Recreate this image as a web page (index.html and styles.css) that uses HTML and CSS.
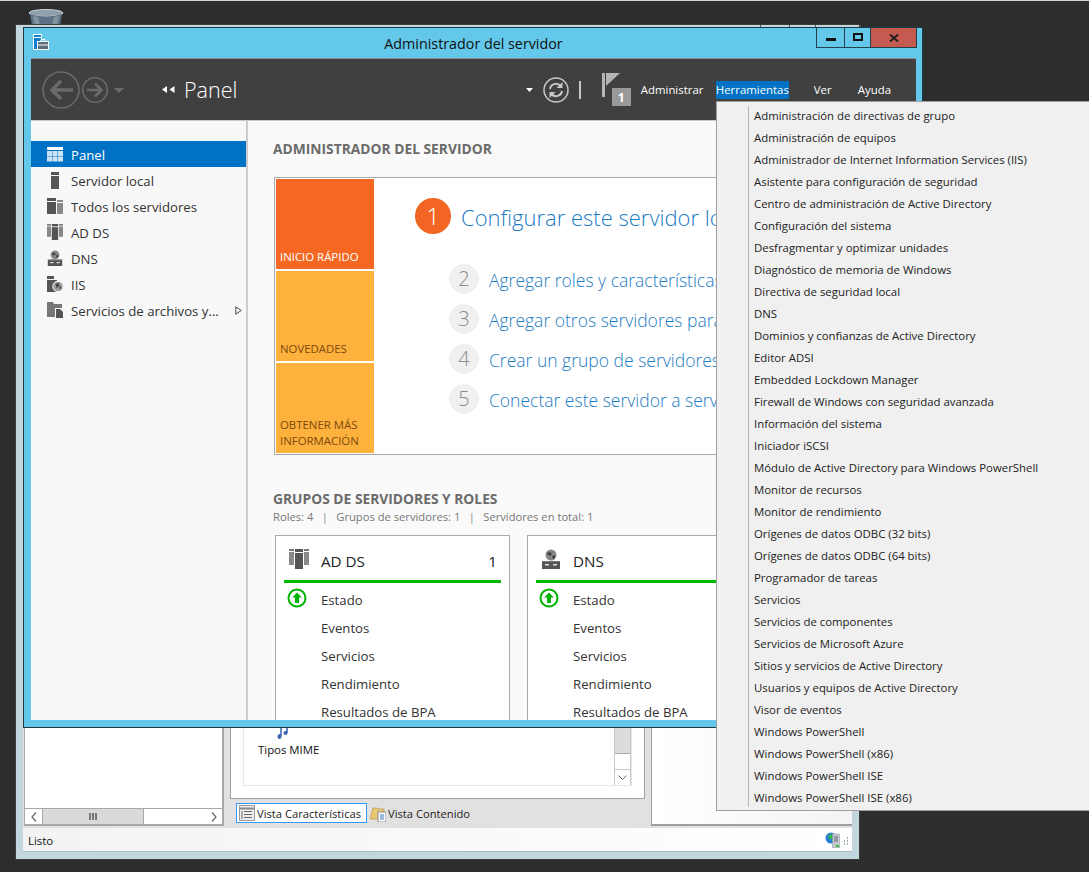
FILE: index.html
```html
<!DOCTYPE html>
<html lang="es">
<head>
<meta charset="utf-8">
<title>Administrador del servidor</title>
<link rel="stylesheet" href="styles.css">
</head>
<body>
<svg class="defs" width="0" height="0">
  <symbol id="i-adds" viewBox="0 0 20 20">
    <rect x="0" y="0" width="5" height="2" fill="#777"/><rect x="15" y="0" width="5" height="2" fill="#777"/>
    <rect x="0" y="3" width="5" height="13" fill="#888"/><rect x="15" y="3" width="5" height="13" fill="#888"/>
    <rect x="6" y="0" width="8" height="3" fill="#555"/><rect x="6" y="4" width="8" height="16" fill="#555"/>
  </symbol>
  <symbol id="i-dns" viewBox="0 0 20 20">
    <circle cx="10" cy="6" r="5.500" fill="#888"/><path d="M6 4l3-1 2 2-2 2-2-1zM11 7l3-1v3l-2 1z" fill="#444"/>
    <rect x="1" y="12" width="18" height="8" fill="#555"/>
    <rect x="4" y="15" width="4" height="1.500" fill="#ddd"/><rect x="12" y="15" width="4" height="1.500" fill="#ddd"/>
    <rect x="1" y="12" width="18" height="1" fill="#777"/>
  </symbol>
  <symbol id="i-status" viewBox="0 0 20 20">
    <circle cx="10" cy="10" r="8.500" fill="#fff" stroke="#00b300" stroke-width="2"/>
    <path d="M10 4.500l4.800 5H12v5.500H8V9.500H5.200z" fill="#00b300"/>
  </symbol>
</svg>
<div class="desktop">
  <div class="topline"></div>
  <svg class="recycle" viewBox="0 0 36 16" width="36" height="16">
    <ellipse cx="18" cy="4" rx="17" ry="3.500" fill="#8fa0ad" stroke="#c9d2d8"/>
    <path d="M2 5l2 11h28l2-11q-16 5-32 0z" fill="#5d7285"/>
    <path d="M5 7l2 9h5L10 8zM26 8l-2 8h5l2-9z" fill="#83939f"/>
  </svg>

  <section class="iis">
    <div class="iis-top">
      <span class="tick tick1"></span><span class="tick tick2"></span><span class="tick tick3"></span><span class="tick tick4"></span>
    </div>
    <div class="iis-body">
      <div class="tree">
        <div class="tree-fill"></div>
        <div class="hscroll">
          <span class="sb-btn"><svg viewBox="0 0 6 10" width="6" height="10"><path d="M5 0.500L1 5l4 4.500" fill="none" stroke="#666" stroke-width="1.200"/></svg></span>
          <span class="sb-thumb"><svg viewBox="0 0 8 7" width="8" height="7"><path d="M1 0v7M4 0v7M7 0v7" stroke="#555" stroke-width="1.500"/></svg></span>
          <span class="sb-track"></span>
          <span class="sb-btn"><svg viewBox="0 0 6 10" width="6" height="10"><path d="M1 0.500L5 5 1 9.500" fill="none" stroke="#666" stroke-width="1.200"/></svg></span>
        </div>
      </div>
      <div class="center">
        <div class="features">
          <div class="feature-box">
            <div class="feature">
              <svg class="note" viewBox="0 0 40 12" width="40" height="12">
                <path d="M15 0v9M21 0v6" stroke="#3a62b5" stroke-width="1.500"/>
                <ellipse cx="13.500" cy="9.500" rx="2" ry="2.500" fill="#3a62b5"/><ellipse cx="19.500" cy="6" rx="2" ry="2" fill="#3a62b5"/>
                <path d="M23 0.500h16" stroke="#bbb"/>
              </svg>
              <span>Tipos MIME</span>
            </div>
            <div class="vscroll">
              <span class="vs-thumb"></span>
              <span class="vs-track"></span>
              <span class="vs-btn"><svg viewBox="0 0 9 5" width="9" height="5"><path d="M0.500 0.500l4 4 4-4" fill="none" stroke="#666"/></svg></span>
            </div>
          </div>
        </div>
        <div class="tabs">
          <div class="tab tab-on">
            <svg viewBox="0 0 16 16" width="16" height="16"><rect x="0.500" y="0.500" width="15" height="15" fill="#eee" stroke="#999"/><path d="M1 3.500h14" stroke="#888" stroke-width="2"/><path d="M5 6.500h8M5 9.500h8M5 12.500h8" stroke="#666"/><path d="M3 6v8" stroke="#aaa" stroke-width="2"/></svg>
            <span>Vista Características</span>
          </div>
          <div class="tab">
            <svg viewBox="0 0 16 18" width="16" height="18"><path d="M0 15L3 4h4l1 1h6v10z" fill="#e9c874" stroke="#b9953f" stroke-width="0.700"/><rect x="8" y="8" width="8" height="10" fill="#fff" stroke="#889"/><path d="M10 11h4M10 13h4M10 15h4" stroke="#3b78c4"/></svg>
            <span>Vista Contenido</span>
          </div>
        </div>
      </div>
      <div class="sidepane"></div>
    </div>
    <footer class="status">
      <span>Listo</span>
      <svg class="status-ico" viewBox="0 0 26 16" width="26" height="16">
        <circle cx="8" cy="6" r="5.500" fill="#2a7fd5"/><path d="M5 3l3-1 2 3-3 3zM9 8l2-1-1 3z" fill="#39b54a"/>
        <rect x="9.500" y="2" width="7" height="14" fill="#c3c9ce" stroke="#8d969c" stroke-width="0.500"/><path d="M11 5h4M11 7h4M11 9h4" stroke="#667"/><rect x="13" y="13" width="3" height="2" fill="#3fbf3f"/>
        <path d="M24 6h1M21 9h1M24 9h1M21 12h1M24 12h1" stroke="#9aa" stroke-width="2"/>
      </svg>
    </footer>
  </section>

  <section class="sm">
    <header class="titlebar">
      <svg class="appicon" viewBox="0 0 16 16" width="16" height="16">
        <rect x="0.500" y="0.500" width="8" height="15" fill="#0f7fd0" stroke="#fff"/>
        <path d="M1 3.500h7" stroke="#fff"/>
        <rect x="4.500" y="7.500" width="11" height="8" fill="#5b6d7a" stroke="#fff"/>
        <path d="M8 7.500V5.500h4v2M5 11h10" fill="none" stroke="#fff"/>
      </svg>
      <h1>Administrador del servidor</h1>
      <div class="controls">
        <span class="ctl ctl-min"><i></i></span>
        <span class="ctl ctl-max"><i></i></span>
        <span class="ctl ctl-close"><svg viewBox="0 0 10 8" width="10" height="8"><path d="M1 0.500l8 7M9 0.500l-8 7" stroke="#222" stroke-width="2"/></svg></span>
      </div>
    </header>
    <nav class="toolbar">
      <svg class="nav-arrows" viewBox="0 0 84 38" width="84" height="38">
        <circle cx="19" cy="19" r="18" fill="none" stroke="#6a6a6a" stroke-width="1.600"/>
        <path d="M31 19H10M19 10l-9 9 9 9" fill="none" stroke="#6a6a6a" stroke-width="3.500"/>
        <circle cx="53" cy="19" r="12.300" fill="none" stroke="#6a6a6a" stroke-width="1.600"/>
        <path d="M45 19h14M53 12.500l6.500 6.500-6.500 6.500" fill="none" stroke="#6a6a6a" stroke-width="2.600"/>
        <path d="M72 17h10l-5 5z" fill="#6a6a6a"/>
      </svg>
      <svg class="crumb" viewBox="0 0 13 7" width="13" height="7"><path d="M5 0v7L0 3.500zM12.500 0v7l-5-3.500z" fill="#fff"/></svg>
      <span class="crumb-text">Panel</span>
      <div class="toolbar-right">
        <svg class="drop" viewBox="0 0 7 4" width="7" height="4"><path d="M0 0h7L3.500 4z" fill="#fff"/></svg>
        <svg class="refresh" viewBox="0 0 26 26" width="26" height="26">
          <circle cx="13" cy="13" r="12" fill="none" stroke="#c8c8c8" stroke-width="1.500"/>
          <path d="M7 12a6 6 0 0 1 10.500-3M19 14a6 6 0 0 1-10.500 3" fill="none" stroke="#c8c8c8" stroke-width="2"/>
          <path d="M19.500 5v6h-6zM6.500 21v-6h6z" fill="#c8c8c8"/>
        </svg>
        <span class="sep"></span>
        <span class="flag">
          <svg viewBox="0 0 18 24" width="18" height="24"><rect x="0" y="0" width="3" height="24" fill="#b5b5b5"/><path d="M4 0h14L4 13z" fill="#b5b5b5"/></svg>
          <b class="badge">1</b>
        </span>
        <ul class="menubar">
          <li>Administrar</li>
          <li class="active">Herramientas</li>
          <li>Ver</li>
          <li>Ayuda</li>
        </ul>
      </div>
    </nav>
    <div class="workspace">
      <aside class="sidebar">
        <ul>
          <li class="selected">
            <svg viewBox="0 0 16 15" width="16" height="15"><rect width="16" height="3" fill="#fff"/><g fill="#cfe3f3"><rect y="4" width="5" height="5"/><rect x="5.500" y="4" width="5" height="5"/><rect x="11" y="4" width="5" height="5"/><rect y="9.500" width="5" height="5"/><rect x="5.500" y="9.500" width="5" height="5"/><rect x="11" y="9.500" width="5" height="5"/></g></svg>
            <span>Panel</span>
          </li>
          <li>
            <svg viewBox="0 0 16 17" width="16" height="17"><rect x="4" width="8" height="3" fill="#555"/><rect x="4" y="4" width="8" height="13" fill="#555"/></svg>
            <span>Servidor local</span>
          </li>
          <li>
            <svg viewBox="0 0 16 16" width="16" height="16"><rect width="9" height="3" fill="#555"/><rect y="4" width="9" height="12" fill="#555"/><rect x="10" y="2" width="6" height="2" fill="#888"/><rect x="10" y="5" width="6" height="11" fill="#888"/></svg>
            <span>Todos los servidores</span>
          </li>
          <li>
            <svg viewBox="0 0 20 20" width="16" height="16"><use href="#i-adds"/></svg>
            <span>AD DS</span>
          </li>
          <li>
            <svg viewBox="0 0 20 20" width="16" height="16"><use href="#i-dns"/></svg>
            <span>DNS</span>
          </li>
          <li>
            <svg viewBox="0 0 16 16" width="16" height="16"><rect width="7" height="3" fill="#555"/><rect y="4" width="10" height="12" fill="#555"/><circle cx="11" cy="10.500" r="5.200" fill="#999" stroke="#fff"/><path d="M8.500 8l3-1 1 3-3 2zM12 12l2-2v3z" fill="#444"/></svg>
            <span>IIS</span>
          </li>
          <li>
            <svg viewBox="0 0 16 16" width="16" height="16"><path d="M0 0h6l1 2h8v4H8v9H0z" fill="#777"/><path d="M9 7h4l3 3v6H9z" fill="#555"/></svg>
            <span class="clip">Servicios de archivos y...</span>
            <svg class="chev" viewBox="0 0 7 9" width="7" height="9"><path d="M0.800 0.800l5.400 3.700-5.400 3.700z" fill="none" stroke="#444"/></svg>
          </li>
        </ul>
      </aside>
      <main class="content">
        <h2 class="h-first">ADMINISTRADOR DEL SERVIDOR</h2>
        <div class="welcome">
          <div class="tiles">
            <div class="tile tile-hot">INICIO RÁPIDO</div>
            <div class="tile">NOVEDADES</div>
            <div class="tile">OBTENER MÁS INFORMACIÓN</div>
          </div>
          <div class="steps">
            <div class="step-main"><span class="num-main">1</span><span class="step-title">Configurar este servidor local</span></div>
            <div class="step"><span class="num">2</span><span class="step-text">Agregar roles y características</span></div>
            <div class="step"><span class="num">3</span><span class="step-text">Agregar otros servidores para administrar</span></div>
            <div class="step"><span class="num">4</span><span class="step-text">Crear un grupo de servidores</span></div>
            <div class="step"><span class="num">5</span><span class="step-text">Conectar este servidor a servicios en la nube</span></div>
          </div>
        </div>
        <h2 class="h-second">GRUPOS DE SERVIDORES Y ROLES</h2>
        <p class="counts">Roles: 4 <i>|</i> Grupos de servidores: 1 <i>|</i> Servidores en total: 1</p>
        <div class="cards">
          <article class="card">
            <header class="card-head">
              <svg viewBox="0 0 20 20" width="20" height="20"><use href="#i-adds"/></svg>
              <span class="card-title">AD DS</span><span class="card-count">1</span>
            </header>
            <ul>
              <li><svg viewBox="0 0 20 20" width="20" height="20"><use href="#i-status"/></svg><span>Estado</span></li>
              <li><span>Eventos</span></li>
              <li><span>Servicios</span></li>
              <li><span>Rendimiento</span></li>
              <li><span>Resultados de BPA</span></li>
            </ul>
          </article>
          <article class="card">
            <header class="card-head">
              <svg viewBox="0 0 20 20" width="20" height="20"><use href="#i-dns"/></svg>
              <span class="card-title">DNS</span><span class="card-count">1</span>
            </header>
            <ul>
              <li><svg viewBox="0 0 20 20" width="20" height="20"><use href="#i-status"/></svg><span>Estado</span></li>
              <li><span>Eventos</span></li>
              <li><span>Servicios</span></li>
              <li><span>Rendimiento</span></li>
              <li><span>Resultados de BPA</span></li>
            </ul>
          </article>
        </div>
      </main>
    </div>
  </section>

  <div class="dropdown">
    <ul>
      <li>Administración de directivas de grupo</li>
      <li>Administración de equipos</li>
      <li>Administrador de Internet Information Services (IIS)</li>
      <li>Asistente para configuración de seguridad</li>
      <li>Centro de administración de Active Directory</li>
      <li>Configuración del sistema</li>
      <li>Desfragmentar y optimizar unidades</li>
      <li>Diagnóstico de memoria de Windows</li>
      <li>Directiva de seguridad local</li>
      <li>DNS</li>
      <li>Dominios y confianzas de Active Directory</li>
      <li>Editor ADSI</li>
      <li>Embedded Lockdown Manager</li>
      <li>Firewall de Windows con seguridad avanzada</li>
      <li>Información del sistema</li>
      <li>Iniciador iSCSI</li>
      <li>Módulo de Active Directory para Windows PowerShell</li>
      <li>Monitor de recursos</li>
      <li>Monitor de rendimiento</li>
      <li>Orígenes de datos ODBC (32 bits)</li>
      <li>Orígenes de datos ODBC (64 bits)</li>
      <li>Programador de tareas</li>
      <li>Servicios</li>
      <li>Servicios de componentes</li>
      <li>Servicios de Microsoft Azure</li>
      <li>Sitios y servicios de Active Directory</li>
      <li>Usuarios y equipos de Active Directory</li>
      <li>Visor de eventos</li>
      <li>Windows PowerShell</li>
      <li>Windows PowerShell (x86)</li>
      <li>Windows PowerShell ISE</li>
      <li>Windows PowerShell ISE (x86)</li>
    </ul>
  </div>
</div>
</body>
</html>
```
FILE: styles.css
```css
* { box-sizing: border-box; }
html, body { margin: 0; padding: 0; }
body { font-family: "Open Sans", "Noto Sans", sans-serif; color: #222; }
ul { list-style: none; margin: 0; padding: 0; }
h1, h2, p { margin: 0; }
.defs { position: absolute; }

.desktop { position: relative; width: 1089px; height: 872px; background: #2d2d2d; overflow: hidden; }
.topline { height: 1px; background: #d5d3c8; }
.recycle { position: absolute; left: 28px; top: 9px; }

/* back window */
.iis { position: absolute; left: 15px; top: 24px; width: 845px; height: 836px; background: #c3d6dd; border: 1px solid #3c3c3c; display: flex; flex-direction: column; padding: 0 7px 7px 7px; }
.iis-top { height: 2px; flex: none; position: relative; }
.tick { position: absolute; top: 0; width: 1px; height: 3px; background: #555; }
.tick1 { left: 737px; } .tick2 { left: 766px; } .tick3 { left: 792px; } .tick4 { left: 837px; }
.iis-body { flex: 1; display: flex; background: #e1e1e1; min-height: 0; }
.tree { width: 200px; margin-left: 1px; margin-bottom: 2px; display: flex; flex-direction: column; background: #fff; border: 1px solid #a8a8a8; border-width: 0 2px 2px 1px; margin-right: 6px; }
.tree-fill { flex: 1; }
.hscroll { height: 16px; display: flex; background: #fff; border-top: 1px solid #a8a8a8; }
.sb-btn { width: 17px; display: flex; align-items: center; justify-content: center; }
.sb-thumb { width: 102px; background: #dadada; border: 1px solid #a8a8a8; border-width: 0 1px; display: flex; align-items: center; justify-content: center; }
.sb-track { flex: 1; }
.center { width: 415px; display: flex; flex-direction: column; margin-right: 6px; }
.features { flex: 1; background: #fff; border: 1px solid #a0a0a0; border-width: 0 1px 1px 1px; padding: 0 0 12px 12px; min-height: 0; display: flex; }
.feature-box { flex: 1; border: 1px solid #e8e8e8; border-width: 0 1px 1px 1px; margin-right: 12px; display: flex; justify-content: space-between; background: #fff; }
.feature { margin: auto 0 27px 14px; display: flex; flex-direction: column; font-size: 11.400px; line-height: 16px; color: #111; }
.note { margin: 0 0 3px 8px; }
.vscroll { width: 17px; display: flex; flex-direction: column; justify-content: flex-end; border: 1px solid #c8c8c8; border-width: 0 1px; }
.vs-thumb { flex: 1; background: #dcdcdc; border-bottom: 1px solid #aaa; }
.vs-track { height: 15px; background: #fff; }
.vs-btn { height: 16px; background: #fff; border-top: 1px solid #c8c8c8; display: flex; align-items: center; justify-content: center; }
.tabs { flex: none; height: 29px; display: flex; align-items: flex-start; padding: 4px 0 0 6px; font-size: 11.200px; color: #222; }
.tab { display: flex; align-items: center; gap: 2px; height: 20px; padding: 0 3px 0 2px; border: 1px solid transparent; white-space: nowrap; }
.tab-on { background: #fff; border-color: #3399ff; width: 131px; }
.sidepane { width: 201px; background: linear-gradient(90deg, #fff, #f4f4f4); border: 1px solid #a0a0a0; border-width: 0 0 2px 1px; margin-bottom: 2px; }
.status { flex: none; height: 24px; background: linear-gradient(90deg, #f3f3f3, #fff); border-bottom: 1px solid #a9bbc3; display: flex; align-items: center; justify-content: space-between; padding: 1px 3px 0 5px; font-size: 11.400px; color: #111; }
.status-ico { margin-top: -1px; }

/* server manager window */
.sm { position: absolute; left: 23px; top: 27px; width: 900px; height: 701px; background: #63c8ea; border: 1px solid #1e3a46; display: flex; flex-direction: column; padding: 0 6px 7px 7px; }
.titlebar { flex: none; height: 30px; position: relative; display: flex; align-items: center; justify-content: center; }
.appicon { position: absolute; left: 2px; top: 6px; }
.titlebar h1 { font-size: 14.300px; font-weight: 400; color: #111; padding-top: 1px; }
.controls { position: absolute; right: -1px; top: 0; display: flex; height: 20px; }
.ctl { display: flex; align-items: center; justify-content: center; height: 20px; border: 1px solid #24404c; border-top: 0; }
.ctl-min { width: 28px; border-right: 0; }
.ctl-min i { width: 10px; height: 3px; background: #111; margin-top: 4px; }
.ctl-max { width: 26px; border-right: 0; }
.ctl-max i { width: 10px; height: 8px; border: 2px solid #111; margin-top: -2px; }
.ctl-close { width: 47px; background: #c55a50; }
.toolbar { flex: none; height: 63px; background: #404040; border-top: 1px solid #8a9094; border-bottom: 1px solid #c8c8c8; display: flex; align-items: center; color: #fff; padding: 0 25px 0 11px; }
.nav-arrows { flex: none; margin-top: 1px; }
.crumb { margin-left: 36px; flex: none; }
.crumb-text { margin-left: 9px; font-size: 21.500px; font-weight: 300; line-height: 30px; margin-top: 1px; }
.toolbar-right { margin-left: auto; display: flex; align-items: center; }
.drop { flex: none; margin-right: -3px; }
.refresh { margin-left: 13px; flex: none; }
.sep { width: 2px; height: 18px; background: #c8c8c8; margin: 0 21px 0 10px; }
.flag { position: relative; display: block; width: 29px; height: 34px; margin-top: 8px; margin-right: 10px; }
.flag svg { position: absolute; left: 0; top: -4px; }
.badge { position: absolute; left: 10px; top: 11px; width: 19px; height: 18px; background: #999; color: #fff; font-size: 12px; font-weight: 700; line-height: 19px; text-align: center; }
.menubar { display: flex; font-size: 11.400px; }
.menubar li { height: 18px; line-height: 18px; white-space: nowrap; }
.menubar li:nth-child(1) { width: 62px; margin-right: 13px; }
.menubar li:nth-child(2) { width: 73px; margin-right: 25px; text-align: center; }
.menubar li:nth-child(3) { width: 18px; margin-right: 26px; }
.menubar .active { background: #0072c6; }
.workspace { flex: 1; display: flex; min-height: 0; background: #fafafa; }
.sidebar { flex: none; width: 217px; background: #f8f8f8; border-right: 2px solid #cccccc; padding-top: 20px; font-size: 13.200px; color: #333; }
.sidebar li { height: 26px; display: flex; align-items: center; padding-left: 16px; }
.sidebar li > span { margin-left: 8px; padding-top: 2px; }
.sidebar .selected { background: #0072c6; color: #fff; }
.sidebar .clip { white-space: nowrap; }
.chev { margin-left: auto; margin-right: 4px; }
.content { flex: 1; min-width: 0; overflow: hidden; padding-left: 25px; }
.content h2 { font-size: 13.800px; font-weight: 700; color: #6b6b6b; white-space: nowrap; line-height: 18px; }
.h-first { padding-top: 19px; }
.welcome { display: flex; width: 700px; height: 278px; margin: 19px 0 0 1px; border: 1px solid #a9a9a9; background: #fff; padding: 1px; }
.tiles { flex: none; width: 98px; display: flex; flex-direction: column; gap: 2px; }
.tile { height: 90px; background: #ffb13d; color: #7c4a0c; font-size: 11.400px; line-height: 16px; padding: 0 4px 4px 4px; display: flex; align-items: flex-end; }
.tile-hot { background: #f66722; color: #fff; }
.steps { padding: 19px 0 0 41px; white-space: nowrap; }
.step-main { display: flex; align-items: center; height: 36px; }
.num-main { flex: none; width: 36px; height: 36px; border-radius: 50%; background: #f26522; color: #fff; text-align: center; font-size: 24px; font-weight: 300; line-height: 36px; }
.step-title { margin-left: 10px; font-size: 22px; font-weight: 300; color: #1b7cc4; padding-top: 2px; }
.step { display: flex; align-items: center; height: 30px; margin-top: 10px; margin-left: 34px; }
.step-main + .step { margin-top: 30px; }
.num { flex: none; width: 30px; height: 30px; border-radius: 50%; background: #f0f0f0; color: #8a8a8a; text-align: center; font-size: 20px; font-weight: 300; line-height: 30px; }
.step-text { margin-left: 10px; font-size: 17.500px; font-weight: 300; color: #1b7cc4; padding-top: 1px; }
.h-second { padding-top: 35px; }
.counts { font-size: 11.200px; line-height: 16px; color: #777; margin-top: 1px; }
.counts i { font-style: normal; margin: 0 5.500px; color: #888; }
.cards { display: flex; gap: 17px; margin: 10px 0 0 2px; width: 800px; }
.card { flex: none; width: 235px; height: 240px; background: #fff; border: 1px solid #a9a9a9; padding: 0 8px; }
.card-head { height: 47px; border-bottom: 3px solid #00bb00; display: flex; align-items: center; padding-left: 5px; font-size: 15.200px; color: #222; }
.card-head svg { margin-top: 2px; }
.card-title { margin-left: 12px; margin-top: 6px; }
.card-count { margin-left: auto; margin-right: 4px; margin-top: 6px; }
.card ul { padding-top: 3px; font-size: 13.200px; color: #333; }
.card li { height: 28px; display: flex; align-items: center; padding-left: 37px; position: relative; }
.card li svg { position: absolute; left: 3px; top: 2px; }

/* dropdown */
.dropdown { position: absolute; left: 716px; top: 101px; width: 373px; height: 710px; background: #f0f0f0; border: 1px solid #a0a0a0; border-right: 0; padding: 4px 0 0 31px; font-size: 11.400px; color: #222; }
.dropdown ul { height: 701px; border-left: 1px solid #b5b5b5; }
.dropdown li { height: 22px; line-height: 19px; padding-left: 5px; white-space: nowrap; }
```
